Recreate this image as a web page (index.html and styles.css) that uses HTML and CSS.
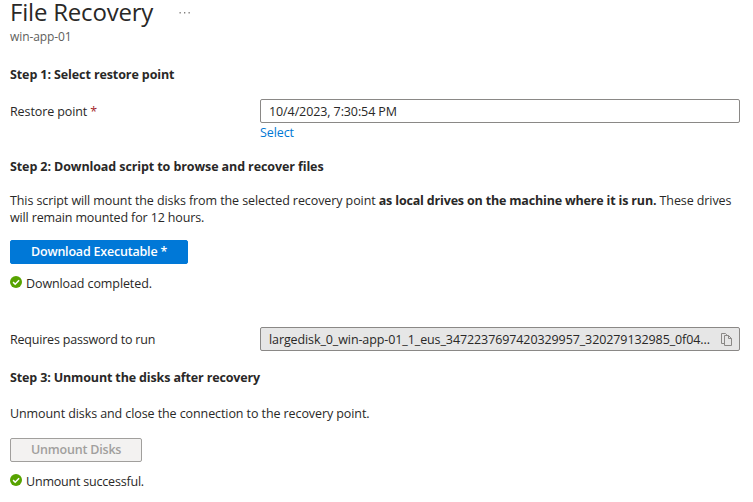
FILE: index.html
```
<!DOCTYPE html>
<html lang="en">
<head>
<meta charset="utf-8">
<title>File Recovery</title>
<link rel="stylesheet" href="styles.css">
</head>
<body>
<main class="blade">
  <header class="header">
    <div class="title-row">
      <h1 class="title">File Recovery</h1>
      <svg class="more" width="12" height="2" viewBox="0 0 12 2" aria-label="More"><path d="M0.5 0h1.3v1.6H0.5zM5 0h1.3v1.6H5zM9.5 0h1.3v1.6H9.5z" fill="#807e7c"/></svg>
    </div>
    <div class="subtitle">win-app-01</div>
  </header>

  <section class="step step-select">
    <h2 class="heading">Step 1: Select restore point</h2>
    <div class="row">
      <label class="label">Restore point <span class="required">*</span></label>
      <div class="field"><span class="value date">10/4/2023, 7:30:54 PM</span></div>
    </div>
    <a class="link">Select</a>
  </section>

  <section class="step step-download">
    <h2 class="heading">Step 2: Download script to browse and recover files</h2>
    <p class="text">This script will mount the disks from the selected recovery point <b>as local drives on the machine where it is run.</b> These drives<br><span class="tight">will remain mounted for 12 hours.</span></p>
    <button class="button primary">Download Executable *</button>
    <div class="status">
      <svg class="check" width="12" height="12" viewBox="0 0 12 12"><circle cx="6" cy="6" r="6" fill="#57a300"/><path d="M3.1 6.1l2.1 2.1 3.9-4" fill="none" stroke="#fff" stroke-width="1.5"/></svg>
      <span>Download completed.</span>
    </div>
    <div class="row password">
      <label class="label tighter">Requires password to run</label>
      <div class="field readonly">
        <span class="value key">largedisk_0_win-app-01_1_eus_3472237697420329957_320279132985_0f04...</span>
        <svg class="copy" width="11" height="13" viewBox="0 0 11 13" fill="none" stroke="#8a8886"><path d="M3.5 10.5h-3V.5h4l1.3 1.3M3.5 2.5h4l3 3v7h-7zM7.5 2.5v3h3"/></svg>
      </div>
    </div>
  </section>

  <section class="step step-unmount">
    <h2 class="heading">Step 3: Unmount the disks after recovery</h2>
    <p class="text">Unmount disks and close the connection to the recovery point.</p>
    <button class="button disabled" disabled>Unmount Disks</button>
    <div class="status">
      <svg class="check" width="12" height="12" viewBox="0 0 12 12"><circle cx="6" cy="6" r="6" fill="#57a300"/><path d="M3.1 6.1l2.1 2.1 3.9-4" fill="none" stroke="#fff" stroke-width="1.5"/></svg>
      <span class="tighter">Unmount successful.</span>
    </div>
  </section>
</main>
</body>
</html>
```
FILE: styles.css
```
* { box-sizing: border-box; }
body {
  margin: 0;
  background: #fff;
  color: #292827;
  font: 12.5px/17px "Open Sans", "Noto Sans", sans-serif;
  letter-spacing: -0.1px;
}
.blade { padding: 0 13px 0 10px; }
.title-row { display: flex; align-items: center; gap: 26px; height: 24px; }
.title { margin: 0; font-size: 24px; line-height: 24px; font-weight: 500; letter-spacing: -0.2px; white-space: nowrap; }
.more { margin-top: 1px; }
.subtitle { margin-top: 5px; font-size: 12px; line-height: 16px; color: #605e5c; }
.step { display: flex; flex-direction: column; align-items: flex-start; }
.step-select { margin-top: 21px; }
.step-download { margin-top: 17px; }
.step-unmount { margin-top: 18px; }
.heading { margin: 0; font-size: 12.5px; line-height: 17px; font-weight: 700; white-space: nowrap; }
.step-unmount .heading { letter-spacing: -0.14px; }
.row { display: flex; align-items: center; width: 100%; height: 24px; margin-top: 16px; }
.label { width: 250px; flex: none; }
.required { color: #a4262c; font-weight: 500; }
.tight { letter-spacing: -0.14px; }
.tighter { letter-spacing: -0.2px; }
.field {
  flex: 1;
  min-width: 0;
  height: 24px;
  display: flex;
  align-items: center;
  justify-content: space-between;
  padding: 0 7px 0 8px;
  border: 1px solid #8a8886;
  border-radius: 2px;
  white-space: nowrap;
}
.readonly { background: #e6e6e6; }
.link { margin: 1px 0 0 250px; color: #0078d4; }
.text { margin: 17px 0 0; white-space: nowrap; letter-spacing: -0.09px; }
.text b { letter-spacing: -0.17px; }
.button {
  height: 24px;
  margin: 14px 0 0;
  padding: 0 20px 2px;
  border: 1px solid #0078d7;
  border-radius: 2px;
  background: #0078d7;
  color: #fff;
  font: 600 12.5px/17px "Open Sans", "Noto Sans", sans-serif;
  letter-spacing: -0.2px;
  white-space: nowrap;
}
.step-download .button { width: 178px; }
.button.disabled { width: 132px; margin-top: 16px; background: #f3f2f1; border-color: #a19f9d; color: #a19f9d; }
.status { display: flex; align-items: flex-start; gap: 4px; margin-top: 11px; }
.check { margin-top: 1px; }
.password { margin-top: 35px; }
.step-unmount .text { margin-top: 19px; }
```
